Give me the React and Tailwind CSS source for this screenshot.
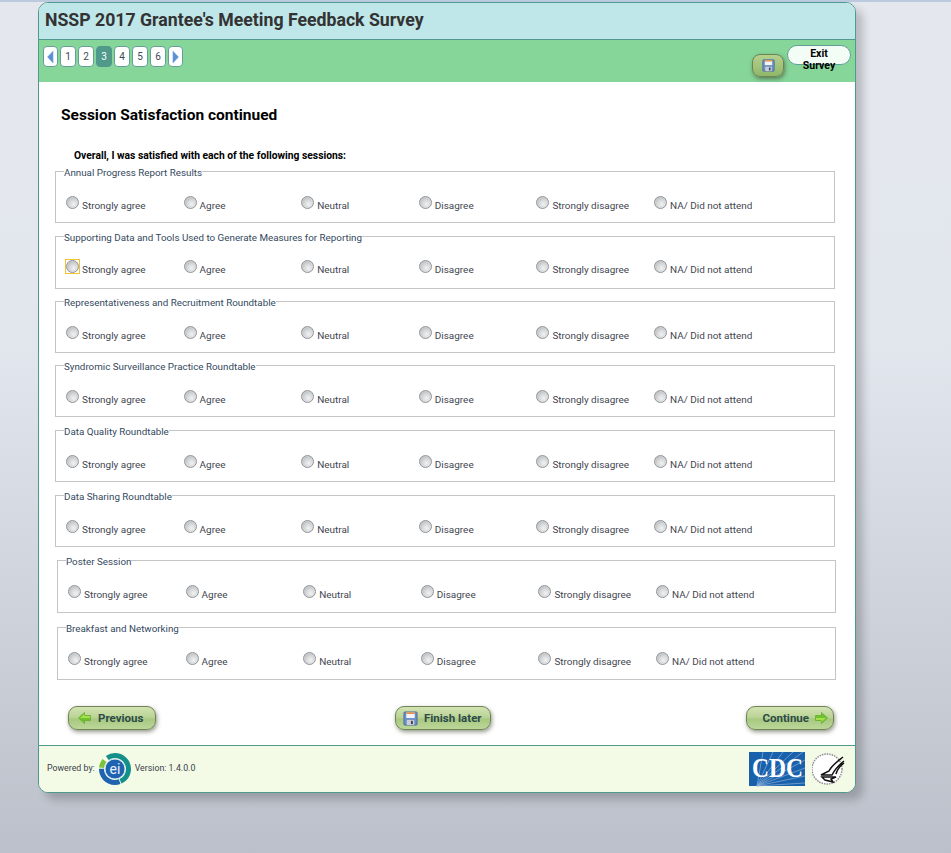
const SESSIONS = [
  { name: "Annual Progress Report Results", h: "h-[58px]", mt: "mt-0", ml: "ml-[16px]", w: "w-[780px]" },
  { name: "Supporting Data and Tools Used to Generate Measures for Reporting", h: "h-[59px]", mt: "mt-[7px]", ml: "ml-[16px]", w: "w-[780px]", focus: true },
  { name: "Representativeness and Recruitment Roundtable", h: "h-[58px]", mt: "mt-[6px]", ml: "ml-[16px]", w: "w-[780px]" },
  { name: "Syndromic Surveillance Practice Roundtable", h: "h-[58px]", mt: "mt-[6px]", ml: "ml-[16px]", w: "w-[780px]" },
  { name: "Data Quality Roundtable", h: "h-[58px]", mt: "mt-[7px]", ml: "ml-[16px]", w: "w-[780px]" },
  { name: "Data Sharing Roundtable", h: "h-[58px]", mt: "mt-[7px]", ml: "ml-[16px]", w: "w-[780px]" },
  { name: "Poster Session", h: "h-[59px]", mt: "mt-[7px]", ml: "ml-[18px]", w: "w-[779px]" },
  { name: "Breakfast and Networking", h: "h-[59px]", mt: "mt-[8px]", ml: "ml-[18px]", w: "w-[779px]" },
];
const OPTIONS = ["Strongly agree", "Agree", "Neutral", "Disagree", "Strongly disagree", "NA/ Did not attend"];

function Floppy({ size = 16 }) {
  return (
    <svg width={size} height={size} viewBox="0 0 16 16" className="shrink-0">
      <rect x="1" y="1" width="14" height="14" rx="1" fill="#6c8fc4" stroke="#4b6ba0" />
      <rect x="3.5" y="1.5" width="9" height="6" fill="#f2f4f7" />
      <rect x="3.5" y="1.5" width="9" height="1.6" fill="#e8872f" />
      <rect x="4" y="9.5" width="8" height="5.5" fill="#c9ced6" />
      <rect x="8.5" y="10.5" width="2" height="3.5" fill="#3b4658" />
    </svg>
  );
}

function Arrow({ flip }) {
  return (
    <svg width="13" height="12" viewBox="0 0 13 12" className={flip ? "shrink-0 rotate-180" : "shrink-0"}>
      <path d="M0.5 6 L6.5 0.5 V3.5 H12.5 V8.5 H6.5 V11.5 Z" fill="#6fc22d" stroke="#5aa51f" strokeWidth="0.6" />
      <path d="M2 6 L6.5 2 V4 H12 V6 Z" fill="#a5e04f" />
    </svg>
  );
}

function PagerArrow({ left }) {
  return (
    <button className="w-[15px] h-[21px] rounded-[4px] border border-[#63a09a] bg-white flex items-center justify-center">
      <svg width="7" height="14" viewBox="0 0 8 15">
        <path d={left ? "M7 0.5 V14.5 L0.5 7.5 Z" : "M1 0.5 V14.5 L7.5 7.5 Z"} fill="#5b8fd6" stroke="#8fb4e8" strokeWidth="0.5" />
      </svg>
    </button>
  );
}

function Radio() {
  return (
    <span className="block shrink-0 w-[13px] h-[13px] rounded-full border border-[#8f9499] bg-[radial-gradient(circle_at_60%_65%,#f2f2f2_0%,#d4d6d8_45%,#a4a7aa_100%)] shadow-[inset_0_0_1px_#fff]" />
  );
}

function Group({ s }) {
  return (
    <fieldset className={`${s.h} ${s.mt} ${s.ml} ${s.w} border border-[#c4c4c4] box-border`}>
      <legend className="ml-[8px] text-[9.8px] leading-[12px] text-[#34495e] font-['Roboto',sans-serif]"><span className="block translate-y-[2px]">{s.name}</span></legend>
      <div className={`flex pl-[10px] ${s.focus ? "pt-[18px]" : "pt-[19px]"}`}>
        {OPTIONS.map((o) => (
          <label key={o} className="w-[117.6px] flex items-start gap-[3px] shrink-0">
            {s.focus && o === "Strongly agree" ? (
              <span className="block shrink-0 w-[15px] h-[15px] -m-px border border-[#f2c230] bg-white">
                <Radio />
              </span>
            ) : <Radio />}
            <span className="text-[9.95px] leading-[13px] mt-[3px] text-[#3f4650] font-['Roboto',sans-serif] whitespace-nowrap">{o}</span>
          </label>
        ))}
      </div>
    </fieldset>
  );
}

function GreenButton({ children, cls }) {
  return (
    <button className={`${cls} h-[24px] rounded-[9px] border border-[#6f8455] bg-[linear-gradient(#d3e3b4_0%,#b9d394_48%,#a8c880_55%,#bcd79a_100%)] shadow-[1px_2px_4px_rgba(60,70,40,0.55)] flex items-center gap-[6px] text-[11.5px] font-bold text-[#2c4a4a] font-['Roboto',sans-serif]`}>
      {children}
    </button>
  );
}

function EiLogo() {
  return (
    <svg width="34" height="34" viewBox="0 0 34 34" className="shrink-0">
      <circle cx="17" cy="17" r="13.5" fill="none" stroke="#14908a" strokeWidth="5" strokeDasharray="44.8 100" transform="rotate(-125 17 17)" />
      <circle cx="17" cy="17" r="13.5" fill="none" stroke="#1f62b0" strokeWidth="5" strokeDasharray="26 100" transform="rotate(70 17 17)" />
      <circle cx="17" cy="17" r="13.5" fill="none" stroke="#7cc440" strokeWidth="5" strokeDasharray="8 100" transform="rotate(185 17 17)" />
      <circle cx="17" cy="17" r="10" fill="#1f62b0" stroke="#cfe3f2" strokeWidth="1" />
      <text x="17" y="22" textAnchor="middle" fontSize="14" fill="#e8f2fb" fontFamily="Roboto,sans-serif">ei</text>
    </svg>
  );
}

function CdcLogo() {
  return (
    <svg width="56" height="34" viewBox="0 0 56 34" className="shrink-0 overflow-visible">
      <rect width="56" height="34" fill="#1a61ab" />
      <g stroke="#8ab1db" strokeWidth="0.7">
        <path d="M8 34 L14 0 M8 34 L24 0 M8 34 L34 0 M8 34 L44 0 M8 34 L54 0 M8 34 L56 8 M8 34 L56 16 M8 34 L56 24 M8 34 L56 31" />
      </g>
      <text x="28.5" y="25" textAnchor="middle" fontSize="28" fontWeight="700" fill="#fff" fontFamily="'Liberation Serif',serif" textLength="51" lengthAdjust="spacingAndGlyphs">CDC</text>
    </svg>
  );
}

function HhsLogo() {
  return (
    <svg width="34" height="36" viewBox="0 0 34 36" className="shrink-0">
      <circle cx="15" cy="18" r="15" fill="#fff" stroke="#8a8590" strokeWidth="1.4" strokeDasharray="1.5 1" />
      <path d="M31 6 C26 10 20 14 17 20 L9 24 L20 24 C23 18 27 14 32 10 M32 12 C28 15 25 19 24 23 M10 26 L24 26 L19 28 L21 31 L13 29 Z" fill="none" stroke="#111" strokeWidth="1.5" />
    </svg>
  );
}

export default function App() {
  return (
    <div className="min-h-[853px] bg-[linear-gradient(#e4e8ee_0%,#e2e6ed_40%,#bcc0ca_100%)] border-t-2 border-[#bccadf] font-['Roboto',sans-serif]">
      <div className="ml-[38px] w-[818px] rounded-[10px] border border-[#4f9a8c] shadow-[7px_7px_8px_rgba(0,0,0,0.2)] overflow-hidden bg-white">
        <div className="h-[37px] bg-[#bfe6e8] border-b border-[#4f9a8c] pl-[6px] flex items-center">
          <h1 className="text-[17.7px] font-bold text-[#333333] leading-none">NSSP 2017 Grantee's Meeting Feedback Survey</h1>
        </div>
        <div className="h-[42px] bg-[#86d69a] flex justify-between pl-[4px] pr-[4px]">
          <div className="flex gap-[2px] pt-[6px] h-fit">
            <PagerArrow left />
            {[1, 2, 3, 4, 5, 6].map((n) => (
              <button key={n} className={`w-[16px] h-[21px] rounded-[4px] border text-[10px] leading-none ${n === 3 ? "bg-[#4f9a8a] border-[#4f9a8a] text-white" : "bg-white border-[#63a09a] text-[#3c4a55]"}`}>{n}</button>
            ))}
            <PagerArrow />
          </div>
          <div className="flex items-start">
            <button className="mt-[14px] w-[32px] h-[23px] rounded-[8px] border border-[#6f8455] bg-[linear-gradient(#b5d08e,#8fb868)] shadow-[1px_2px_4px_rgba(60,70,40,0.6)] flex items-center justify-center">
              <Floppy size={13} />
            </button>
            <button className="ml-[3px] mt-[5px] w-[64px] h-[20px] rounded-full border border-[#63a09a] bg-[#f4fcf6] text-[10.5px] leading-[12px] font-bold text-black text-center self-start overflow-visible">
              <span className="block h-[18px] pt-[2px]">Exit<br />Survey</span>
            </button>
          </div>
        </div>
        <div className="h-[663px] bg-white">
          <h2 className="pl-[22px] pt-[22px] text-[15.5px] leading-[22px] font-bold text-black">Session Satisfaction continued</h2>
          <p className="pl-[35px] mt-[24px] text-[10.3px] leading-[12px] font-bold text-black">Overall, I was satisfied with each of the following sessions:</p>
          <div className="mt-[3px]">
            {SESSIONS.map((s) => <Group key={s.name} s={s} />)}
          </div>
          <div className="flex pl-[29px] pr-[21px] mt-[26px]">
            <GreenButton cls="w-[88px] pl-[9px]"><Arrow /><span className="ml-[1px] pt-[1px]">Previous</span></GreenButton>
            <div className="ml-[239px] mr-[255px]">
              <GreenButton cls="w-[96px] pl-[7px]"><Floppy size={15} /><span className="pt-[1px]">Finish later</span></GreenButton>
            </div>
            <GreenButton cls="w-[88px] justify-end pr-[5px] gap-[3px]"><span className="pt-[1px]">Continue</span><Arrow flip /></GreenButton>
          </div>
        </div>
        <div className="h-[47px] bg-[#f3fbe6] border-t border-[#4f9a8c] flex items-center justify-between pl-[8px] pr-[9px] text-[8.8px] text-[#3a4048]">
          <div className="flex items-center gap-[3px]">
            <span>Powered by:</span>
            <EiLogo />
            <span>Version: 1.4.0.0</span>
          </div>
          <div className="flex items-center gap-[7px]">
            <CdcLogo />
            <HhsLogo />
          </div>
        </div>
      </div>
    </div>
  );
}
